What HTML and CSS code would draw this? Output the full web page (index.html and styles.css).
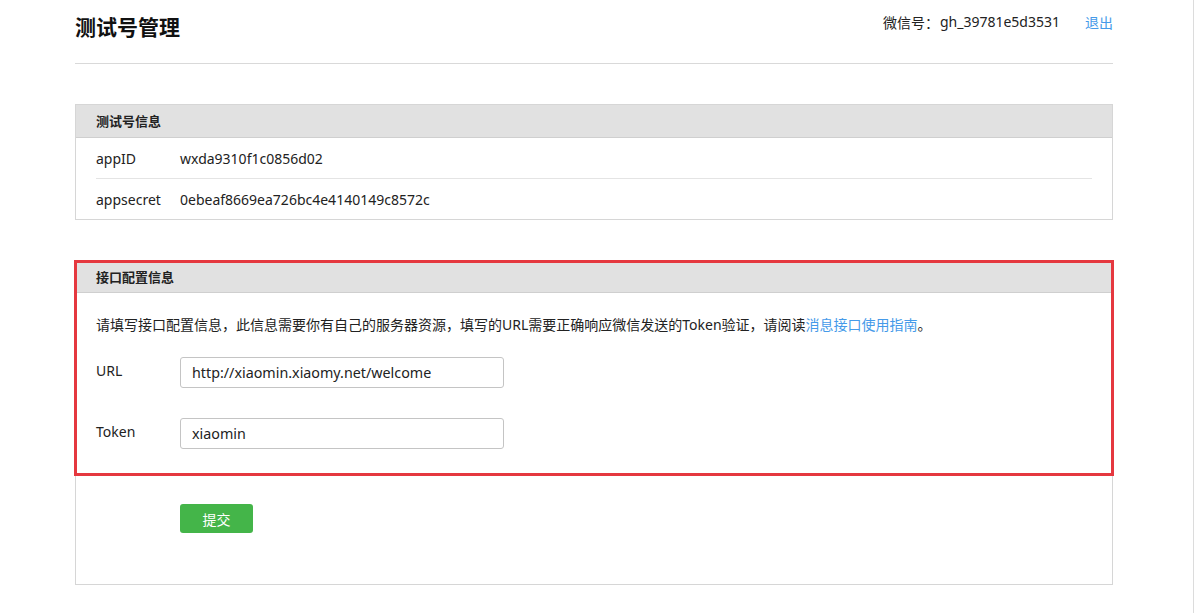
FILE: index.html
```html
<!DOCTYPE html>
<html lang="zh-CN">
<head>
<meta charset="utf-8">
<title>测试号管理</title>
<link rel="stylesheet" href="styles.css">
</head>
<body>
<div class="page">
  <div class="container">
    <header class="topbar">
      <h1 class="title">测试号管理</h1>
      <div class="account">
        <span class="account-label">微信号：</span>
        <span class="account-id">gh_39781e5d3531</span>
        <a class="logout" href="#">退出</a>
      </div>
    </header>

    <section class="panel">
      <div class="panel-head">测试号信息</div>
      <div class="panel-body info">
        <div class="info-row">
          <span class="info-label">appID</span>
          <span class="info-value">wxda9310f1c0856d02</span>
        </div>
        <div class="info-row">
          <span class="info-label">appsecret</span>
          <span class="info-value">0ebeaf8669ea726bc4e4140149c8572c</span>
        </div>
      </div>
    </section>

    <section class="panel panel-config">
      <div class="highlight"></div>
      <div class="panel-head">接口配置信息</div>
      <div class="panel-body config">
        <p class="desc">请填写接口配置信息，此信息需要你有自己的服务器资源，填写的URL需要正确响应微信发送的Token验证，请阅读<a class="link" href="#">消息接口使用指南</a>。</p>
        <div class="form-row">
          <label class="form-label">URL</label>
          <div class="input">http://xiaomin.xiaomy.net/welcome</div>
        </div>
        <div class="form-row">
          <label class="form-label">Token</label>
          <div class="input">xiaomin</div>
        </div>
        <div class="form-actions">
          <button class="btn-submit" type="button">提交</button>
        </div>
      </div>
    </section>
  </div>
</div>
</body>
</html>
```

FILE: styles.css
```css
* { box-sizing: border-box; }
html, body { margin: 0; padding: 0; }
body {
  font-family: "Noto Sans", "Noto Sans CJK SC", sans-serif;
  color: #222;
  background: #fff;
}
.page {
  width: 1194px;
  min-height: 613px;
  border-right: 1px solid #dcdcdc;
}
.container {
  width: 1038px;
  margin-left: 75px;
}
.topbar {
  display: flex;
  justify-content: space-between;
  align-items: flex-start;
  height: 64px;
  border-bottom: 1px solid #d9d9d9;
}
.title {
  margin: 12px 0 0;
  font-family: "Noto Sans CJK SC", sans-serif;
  font-size: 21px;
  line-height: 28px;
  font-weight: 700;
  color: #111;
}
.account {
  display: flex;
  align-items: center;
  margin-top: 11px;
  font-size: 14px;
  line-height: 22px;
  color: #222;
}
.account-label { font-family: "Noto Sans CJK SC", sans-serif; }
.account-id { margin-left: 1px; }
.logout {
  margin-left: 25px;
  color: #459ae9;
  text-decoration: none;
  font-family: "Noto Sans CJK SC", sans-serif;
}
.panel {
  margin-top: 40px;
  border: 1px solid #d6d6d6;
  position: relative;
}
.panel-head {
  height: 33px;
  line-height: 32px;
  padding: 0 20px;
  background: #e1e1e1;
  border-bottom: 1px solid #cfcfcf;
  font-family: "Noto Sans CJK SC", sans-serif;
  font-size: 13px;
  font-weight: 700;
  color: #222;
}
.panel-config .panel-head { height: 32px; line-height: 31px; }
.info { padding: 0 20px; }
.info-row {
  display: flex;
  align-items: center;
  height: 41px;
  font-size: 14px;
  border-bottom: 1px solid #e4e4e4;
}
.info-row:last-child { border-bottom: 0; height: 40px; }
.info-label { width: 84px; flex: none; }
.config { padding: 21px 20px 51px; }
.desc {
  margin: 0;
  font-size: 14px;
  line-height: 22px;
  color: #222;
}
.link { color: #459ae9; text-decoration: none; }
.form-row {
  display: flex;
  align-items: center;
  margin-top: 21px;
}
.form-row + .form-row { margin-top: 30px; }
.form-label {
  width: 84px;
  flex: none;
  font-size: 14px;
  line-height: 20px;
  margin-top: -3px;
}
.input {
  width: 324px;
  height: 31px;
  border: 1px solid #c4c4c4;
  border-radius: 3px;
  padding: 0 11px;
  font-size: 14.3px;
  line-height: 29px;
  color: #222;
}
.form-actions {
  margin-top: 55px;
  padding-left: 84px;
}
.btn-submit {
  display: block;
  width: 73px;
  height: 29px;
  border: 0;
  border-radius: 3px;
  background: #44b549;
  color: #fff;
  font-family: "Noto Sans CJK SC", sans-serif;
  font-size: 14px;
  padding: 0;
}
.highlight {
  position: absolute;
  left: -2px;
  right: -2px;
  top: -1px;
  height: 216px;
  border: 3px solid #e5383f;
  pointer-events: none;
  z-index: 2;
}
```
